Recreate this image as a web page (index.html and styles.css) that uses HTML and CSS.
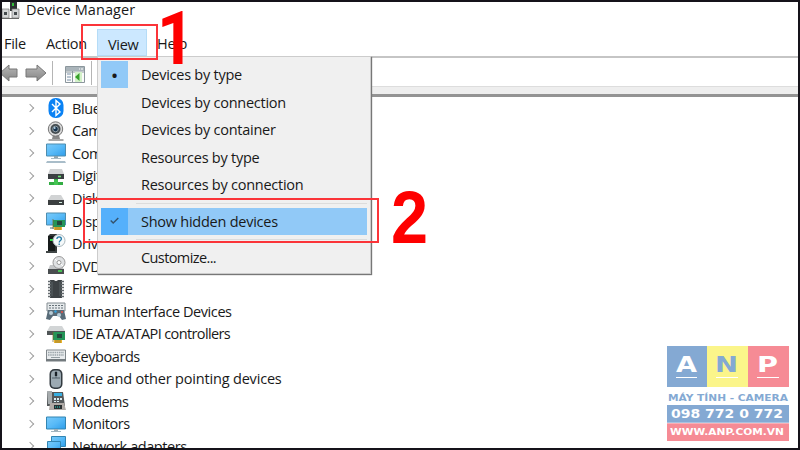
FILE: index.html
```html
<!DOCTYPE html>
<html lang="en">
<head>
    <meta charset="UTF-8">
    <meta name="viewport" content="width=device-width, initial-scale=1.0">
    <title>Device Manager</title>
    <link rel="stylesheet" href="styles.css">
</head>
<body>
    <div class="window">
        <header class="titlebar">
            <svg class="app-icon" width="18" height="18" viewBox="0 0 18 18">
                <path d="M8 0h7v9H8z" fill="#2e3234"/>
                <path d="M10 1h2v3h-2z" fill="#35bd3b"/>
                <path d="M0 7h7v9H0zM10 7h7v9h-7z" fill="#d3d5d6" stroke="#777" stroke-width=".7"/>
                <path d="M0 16.5h17" stroke="#666"/>
                <path d="M2 10h3v3H2zM12 10h3v3h-3z" fill="#454b4e"/>
            </svg>
            <span class="title">Device Manager</span>
        </header>
        <nav class="menubar">
            <span class="menu file">File</span>
            <span class="menu action">Action</span>
            <span class="menu view">View</span>
            <span class="menu help">Help</span>
        </nav>
        <div class="toolbar">
            <svg width="48" height="22" viewBox="0 0 48 22">
                <defs>
                    <linearGradient id="arrow" x2="0" y2="1"><stop stop-color="#b8b8b8"/><stop offset="1" stop-color="#858585"/></linearGradient>
                </defs>
                <path d="M-2 11L7 3v4h8v8H7v4z" fill="url(#arrow)" stroke="#777"/>
                <path d="M44 11L35 3v4h-11v8h11v4z" fill="url(#arrow)" stroke="#777"/>
            </svg>
            <i class="divider"></i>
            <svg class="tool-icon" width="20" height="18" viewBox="0 0 20 18">
                <path d="M.5 .5h19v16H.5z" fill="#fbfbfb" stroke="#8b969c"/>
                <path d="M1 1h18v4H1z" fill="#aab4ba"/>
                <path d="M14 3h1M16 3h2" stroke="#fff"/>
                <path d="M2 8h4M2 11h4M2 14h4" stroke="#7890a8"/>
                <path d="M7.500 5v12M1 6h18" stroke="#8b969c"/>
                <path d="M10 6h7v10h-7z" fill="#d3f1c9"/>
                <path d="M14.500 7v8L10 11z" fill="#37a12b"/>
            </svg>
            <i class="divider second"></i>
        </div>
        <div class="band"></div>
        <ul class="tree">
            <li>
                <svg class="icon" viewBox="0 0 20 20"><rect x="2.500" y="0" width="15" height="20" rx="7" fill="#0a82f4"/><path d="M6 6l8 8-4 3.500v-15L14 6l-8 8" fill="none" stroke="#fff" stroke-width="1.400"/></svg>
                <span>Bluetooth</span>
            </li>
            <li>
                <svg class="icon" viewBox="0 0 20 20"><path d="M7 14h6l1 4H6z" fill="#888"/><path d="M2.500 19h15" stroke="#555"/><circle cx="9.500" cy="8" r="7.200" fill="#d9d9d9" stroke="#777"/><circle cx="9.500" cy="8" r="5" fill="#444c50"/><circle cx="9.500" cy="8" r="2.800" fill="#17344d" stroke="#929fa8"/><circle cx="8.600" cy="7" r="1" fill="#b3d4e8"/></svg>
                <span>Cameras</span>
            </li>
            <li>
                <svg class="icon" viewBox="0 0 20 20"><path d="M.5 1h19v12H.5z" fill="url(#screen)" stroke="#4e8daf"/><path d="M8 13h4v2H8z" fill="#8fa4ad"/><path d="M5 15.500h10" stroke="#a8bbc4"/><path d="M1 18h18l1 2H0z" fill="#a9bdc9"/></svg>
                <span>Computer</span>
            </li>
            <li>
                <svg class="icon" viewBox="0 0 20 20"><path d="M8 13h4v3h5v3H3v-3h5z" fill="#32ad43"/><path d="M4 3h12l2 5H2z" fill="#cfd1d2"/><path d="M2 8h16v5H2z" fill="#3a3f41"/><path d="M12 10.500h3" stroke="#6eea77" stroke-width="1.500"/><path d="M8 14h4v5H8z" fill="#43c452"/></svg>
                <span>Digital Media Devices</span>
            </li>
            <li>
                <svg class="icon" viewBox="0 0 20 20"><path d="M5 7h10l3 5H2z" fill="#d1d3d4"/><path d="M2 12h16v5H2z" fill="#3b3f40"/><path d="M13 14.500h3" stroke="#d5eee2"/></svg>
                <span>Disk drives</span>
            </li>
            <li>
                <svg class="icon" viewBox="0 0 20 20"><path d="M.5 2h19v12H.5z" fill="url(#screen)" stroke="#4e8daf"/><path d="M4 17h6" stroke="#a6b8c1" stroke-width="2"/><path d="M7 9h12v7H7z" fill="#249558"/><path d="M11 10h5v4h-5z" fill="#24483c"/><path d="M8 16h8v3H8z" fill="#eab52e"/><path d="M10 16v3M12 16v3M14 16v3M7 8v10" stroke="#806622" stroke-width=".7"/></svg>
                <span>Display adapters</span>
            </li>
            <li>
                <svg class="icon" viewBox="0 0 20 20"><path d="M2 2l2-2h7v17H2z" fill="#333838"/><path d="M2 2h7v15H2z" fill="#171b1b"/><path d="M0 17h11v2H0z" fill="#404646"/><path d="M4 6h3" stroke="#2ddd48" stroke-width="2"/><circle cx="13" cy="6.500" r="6" fill="#f5f9fa" stroke="#aab7bc"/><path d="M10.900 5c0-3 4.500-2.500 4.500 0 0 1.600-2.200 1.500-2.200 3.500M13.200 9.500v1.500" fill="none" stroke="#267ca8" stroke-width="1.300"/></svg>
                <span>Driver packages</span>
            </li>
            <li>
                <svg class="icon" viewBox="0 0 20 20"><path d="M4 9h12l2 5H2z" fill="#c4c6c8"/><path d="M2 13h16v5H2z" fill="#494d4f"/><circle cx="13" cy="6.500" r="6" fill="#dfe1e3" stroke="#999"/><circle cx="13" cy="6.500" r="2" fill="#fff" stroke="#999"/><path d="M9 3l2 2M15 8l2 2" stroke="#fff"/><path d="M12 15h4" stroke="#49e757" stroke-width="1.500"/></svg>
                <span>DVD/CD-ROM drives</span>
            </li>
            <li>
                <svg class="icon" viewBox="0 0 20 20"><path d="M4 1h4q2 2 4 0h4v18H4z" fill="#3d4245"/><path d="M2 2.500h3M2 5.500h3M2 8.500h3M2 11.500h3M2 14.500h3M2 17.500h3M15 2.500h3M15 5.500h3M15 8.500h3M15 11.500h3M15 14.500h3M15 17.500h3" stroke="#656b6f" stroke-width="1.700"/><path d="M6 3v14M14 3v14" stroke="#596065"/></svg>
                <span>Firmware</span>
            </li>
            <li>
                <svg class="icon" viewBox="0 0 20 20"><path d="M1 2h18v8H1z" fill="#e5e9eb" stroke="#848d92"/><path d="M3 4.500h14M3 7h14" stroke="#667178" stroke-dasharray="2 1"/><path d="M2 9h16l2 9-4 1-3-4H7l-3 4-4-1z" fill="#596c79"/><circle cx="5" cy="12" r="2" fill="#b8ccd6"/><circle cx="13" cy="14" r="2" fill="#bad0dc"/><path d="M9 9l2 1-1 2-2-1z" fill="#36a4df"/><circle cx="16" cy="11" r="1" fill="#eb5145"/></svg>
                <span>Human Interface Devices</span>
            </li>
            <li class="tight">
                <svg class="icon" viewBox="0 0 20 20"><path d="M4 2h12l3 5H1z" fill="#d2d5d6"/><path d="M1 7h18v4H1z" fill="#505557"/><path d="M7 8h12v8H7z" fill="#249558"/><path d="M11 10h5v4h-5z" fill="#24483c"/><path d="M8 16h8v3H8z" fill="#eab52e"/><path d="M10 16v3M12 16v3M14 16v3M7 8v10" stroke="#806622" stroke-width=".7"/></svg>
                <span>IDE ATA/ATAPI controllers</span>
            </li>
            <li>
                <svg class="icon" viewBox="0 0 20 20"><path d="M.5 4h19v10H.5z" fill="#e8ebed" stroke="#81888c"/><path d="M2 6.500h16M2 9h16" stroke="#9ba5aa" stroke-width="1.500" stroke-dasharray="1.500 .7"/><path d="M0 13h20v2.500H0z" fill="#737a7e"/><path d="M5 11.500h9" stroke="#939da2"/></svg>
                <span>Keyboards</span>
            </li>
            <li class="loose">
                <svg class="icon" viewBox="0 0 20 20"><rect x="3.500" y="0" width="13" height="20" rx="5" fill="#323a40"/><rect x="5" y="1.500" width="10" height="17" rx="4" fill="#9caab3"/><path d="M6 9h8M10 2v7" stroke="#52616b"/><path d="M10 3v4" stroke="#182027" stroke-width="2.300"/></svg>
                <span>Mice and other pointing devices</span>
            </li>
            <li>
                <svg class="icon" viewBox="0 0 20 20"><path d="M1 1h16l2 14H1z" fill="#54585a"/><path d="M1 0h5v13H2z" fill="#a6abad"/><path d="M8 2h8v3H8z" fill="#37afe1"/><path d="M8 7h2v2H8zM11 7h2v2h-2zM14 7h2v2h-2zM8 10h2v1H8zM11 10h2v1h-2z" fill="#d8eef5"/><path d="M4 12h14l2 7H3z" fill="#b0aaa6"/><path d="M8 14h8v4H8z" fill="#282e30"/><path d="M9 16h5" stroke="#29dbd1" stroke-dasharray="1 1"/></svg>
                <span>Modems</span>
            </li>
            <li>
                <svg class="icon" viewBox="0 0 20 20"><path d="M.5 3h19v12H.5z" fill="url(#screen)" stroke="#3385b2"/><path d="M8 15h4v2H8z" fill="#9eafb7"/><path d="M5 17.500h10" stroke="#a3b5bf"/></svg>
                <span>Monitors</span>
            </li>
            <li>
                <svg class="icon" viewBox="0 0 20 20"><path d="M5.500 .5h14v10h-14z" fill="url(#screen)" stroke="#3385b2"/><path d="M1.500 5.500h13v11h-13z" fill="url(#screen)" stroke="#3385b2"/><path d="M5 18h7" stroke="#91aab8"/></svg>
                <span>Network adapters</span>
            </li>
        </ul>

        <div class="dropdown">
            <div class="option current"><b class="mark">•</b><span>Devices by type</span></div>
            <div class="option"><b class="mark"></b><span>Devices by connection</span></div>
            <div class="option"><b class="mark"></b><span>Devices by container</span></div>
            <div class="option"><b class="mark"></b><span>Resources by type</span></div>
            <div class="option"><b class="mark"></b><span>Resources by connection</span></div>
            <hr>
            <div class="option selected">
                <b class="mark"><svg width="9" height="8" viewBox="0 0 9 8"><path d="M.7 3.500l2.500 2.500L8.300 1" fill="none" stroke="#35536d" stroke-width="1.400"/></svg></b>
                <span>Show hidden devices</span>
            </div>
            <hr>
            <div class="option customize"><b class="mark"></b><span>Customize...</span></div>
        </div>

        <div class="outline outline-view"></div>
        <div class="outline outline-hidden"></div>
        <div class="step step-one">1</div>
        <div class="step step-two">2</div>

        <svg class="logo" width="122" height="96" viewBox="0 0 122 96">
            <path d="M0 0h40v41H0z" fill="#84a9d3"/>
            <path d="M40 0h41v41H40z" fill="#fbf58a"/>
            <path d="M81 0h41v41H81z" fill="#f68b95"/>
            <g class="logo-letters">
                <text x="9" y="26" textLength="21" lengthAdjust="spacingAndGlyphs" fill="#fff">A</text>
                <text x="48" y="26" textLength="23" lengthAdjust="spacingAndGlyphs" fill="#84a9d3">N</text>
                <text x="90" y="26" textLength="21" lengthAdjust="spacingAndGlyphs" fill="#fff">P</text>
            </g>
            <path d="M9 31.500h21M49 31.500h22M90 31.500h22" stroke="#fff"/>
            <path d="M0 59h122v18H0z" fill="#84a9d3"/>
            <path d="M0 77h122v18H0z" fill="#f68b95"/>
            <path d="M0 77h122" stroke="#fff" stroke-opacity=".6"/>
            <g class="logo-lines">
                <text x="1" y="55" textLength="120" lengthAdjust="spacingAndGlyphs" fill="#84a9d3" font-size="9">MÁY TÍNH - CAMERA</text>
                <text x="4" y="72" textLength="112" lengthAdjust="spacingAndGlyphs" fill="#fff" font-size="11.500">098 772 0 772</text>
                <text x="3" y="89" textLength="114" lengthAdjust="spacingAndGlyphs" fill="#fff" font-size="9">WWW.ANP.COM.VN</text>
            </g>
        </svg>
    </div>

    <svg width="0" height="0">
        <defs>
            <linearGradient id="screen" x2="1" y2="1"><stop stop-color="#79cafa"/><stop offset=".5" stop-color="#58baf7"/><stop offset="1" stop-color="#2e9ce9"/></linearGradient>
        </defs>
    </svg>
</body>
</html>
```
FILE: styles.css
```css
* {
    box-sizing: border-box;
}

body {
    margin: 0;
    height: 450px;
    overflow: hidden;
    font-family: "Open Sans", "Noto Sans", sans-serif;
    font-size: 14.5px;
    color: #191919;
}

.window {
    position: relative;
    display: flex;
    flex-direction: column;
    width: 800px;
    height: 450px;
    border: 2px solid #15131a;
    background: #fff;
    overflow: hidden;
}

.titlebar {
    display: flex;
    flex: none;
    height: 27px;
}

.title {
    margin-left: 6px;
    line-height: 16px;
    font-size: 14.5px;
    letter-spacing: 0.05px;
}

.menubar {
    display: flex;
    flex: none;
    height: 29px;
    border-bottom: 2px solid #c5c5c5;
    line-height: 30px;
    letter-spacing: -0.3px;
}

.file {
    width: 42px;
    padding-left: 2px;
}

.action {
    width: 53px;
    padding-left: 2px;
}

.view {
    width: 50px;
    height: 27px;
    padding-left: 10px;
    background: #cce8ff;
    border: 1px solid #b5dcf7;
    line-height: 30px;
}

.help {
    padding-left: 10px;
}

.toolbar {
    display: flex;
    flex: none;
    height: 28px;
    padding-top: 4px;
}

.divider {
    width: 1px;
    height: 24px;
    margin: -1px 12px 0 2px;
    background: #b5b5b5;
}

.tool-icon {
    margin-top: 4px;
}

.divider.second {
    margin-left: 6px;
}

.band {
    flex: none;
    height: 11px;
    background: #eee;
    border-top: 1px solid #ddd;
    border-bottom: 3px solid #939393;
}

.tree {
    list-style: none;
    margin: 0;
    padding: 0;
}

.tree li {
    display: flex;
    align-items: center;
    height: 22.55px;
    padding-left: 25px;
    white-space: nowrap;
    letter-spacing: -0.42px;
}

.tree li::before {
    content: "";
    width: 5px;
    height: 5px;
    margin-right: 13px;
    border-top: 1.5px solid #a0a0a0;
    border-right: 1.5px solid #a0a0a0;
    transform: rotate(45deg);
}

.tree .tight {
    letter-spacing: -0.62px;
}

.tree .loose {
    letter-spacing: -0.18px;
}

.icon {
    width: 20px;
    height: 20px;
    margin-right: 6px;
}

.dropdown {
    position: absolute;
    left: 95px;
    top: 54px;
    width: 274px;
    height: 218px;
    padding: 4px 3px 3px;
    background: #f0f0f0;
    border: 1px solid #ccc;
    box-shadow: 1px 1px 1px #777;
}

.option {
    display: flex;
    align-items: center;
    height: 27.5px;
    letter-spacing: -0.25px;
}

.customize {
    letter-spacing: -0.6px;
}

.mark {
    display: flex;
    align-items: center;
    justify-content: center;
    width: 27px;
    height: 27px;
    margin-right: 13px;
    font-size: 15px;
}

.current .mark {
    background: #91c9f7;
}

.selected {
    background: #91c9f7;
}

.selected .mark {
    background: #55b0fb;
    height: 100%;
}

.dropdown hr {
    height: 1px;
    margin: 4px 0 4px 35px;
    border: 0;
    background: #dcdcdc;
}

.outline {
    position: absolute;
    border: 2px solid #fb3439;
}

.outline-view {
    left: 79px;
    top: 22px;
    width: 77px;
    height: 36px;
}

.outline-hidden {
    left: 81px;
    top: 196px;
    width: 296px;
    height: 45px;
}

.step {
    position: absolute;
    color: #fe0000;
    font-weight: bold;
    font-size: 74px;
    line-height: 74px;
    transform-origin: left;
}

.step-one {
    left: 155px;
    top: 0;
    font-family: Roboto, sans-serif;
    transform: scaleX(0.88);
}

.step-two {
    left: 389px;
    top: 179px;
    font-family: "Liberation Sans", Arial, sans-serif;
    transform: scaleX(0.9);
}

.logo {
    position: absolute;
    left: 665px;
    top: 344px;
}

.logo-letters {
    font-family: "DejaVu Sans", sans-serif;
    font-weight: bold;
    font-size: 21px;
}

.logo-lines {
    font-family: "DejaVu Sans", sans-serif;
    font-weight: bold;
}
```
